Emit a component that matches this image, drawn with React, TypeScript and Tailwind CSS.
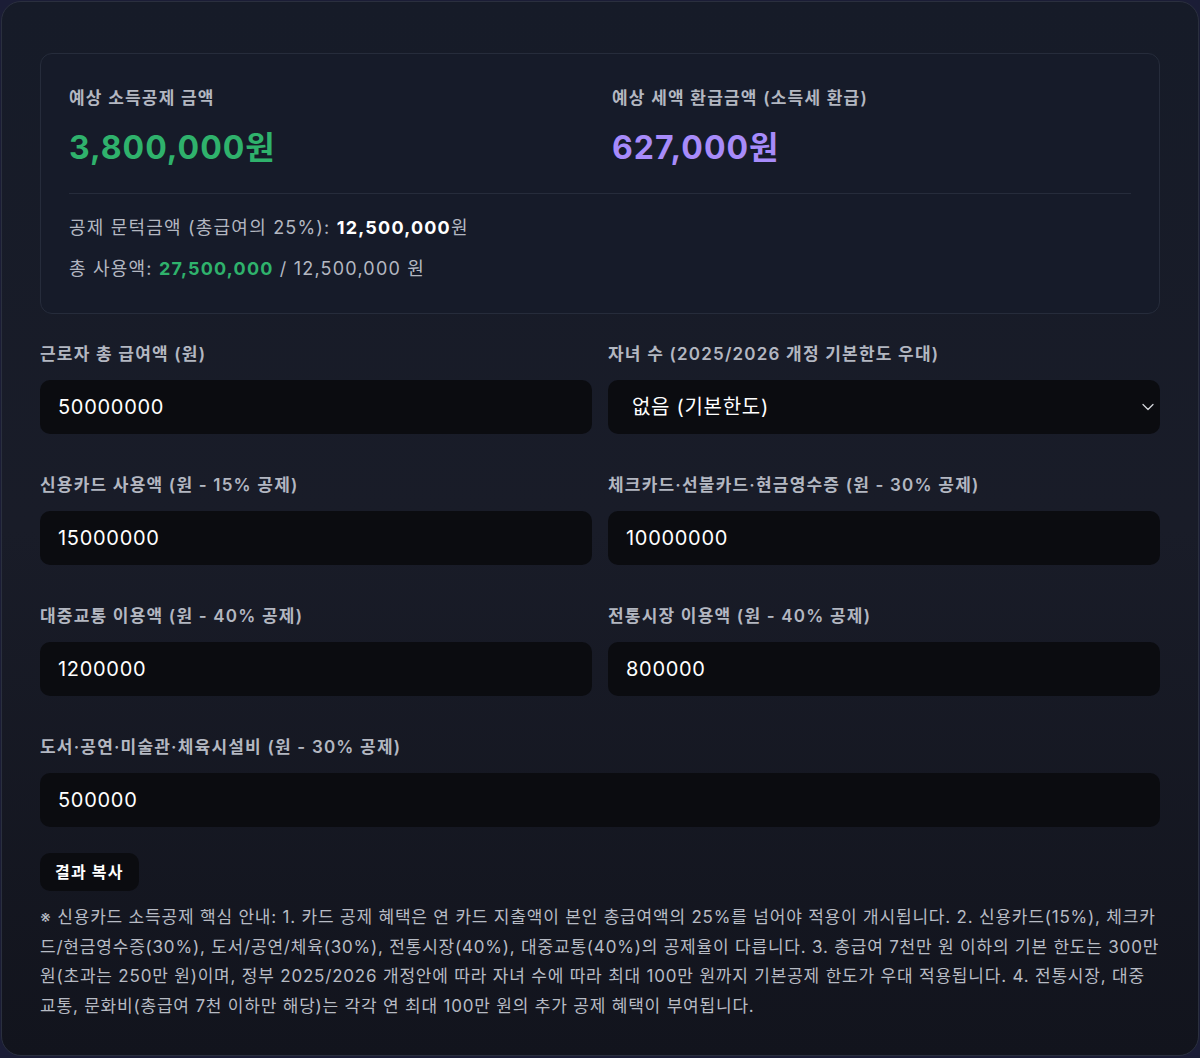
import { ChevronDown } from 'lucide-react';

const FONT = { fontFamily: 'Inter, "Noto Sans CJK KR", sans-serif' };

type Field = {
    label: string;
    value: string;
    wide?: boolean;
};

const FIELDS: Field[] = [
    { label: '신용카드 사용액 (원 - 15% 공제)', value: '15000000' },
    { label: '체크카드·선불카드·현금영수증 (원 - 30% 공제)', value: '10000000' },
    { label: '대중교통 이용액 (원 - 40% 공제)', value: '1200000' },
    { label: '전통시장 이용액 (원 - 40% 공제)', value: '800000' },
    { label: '도서·공연·미술관·체육시설비 (원 - 30% 공제)', value: '500000', wide: true },
];

function Label({ children }: { children: React.ReactNode }) {
    return (
        <label className="mb-[14px] block text-[17px] leading-6 font-semibold tracking-[1.2px] text-[#b3b7c1]">
            {children}
        </label>
    );
}

function NumberInput({ value }: { value: string }) {
    return (
        <input
            type="text"
            defaultValue={value}
            className="h-[54px] w-full rounded-[10px] bg-[#0b0c10] px-[18px] text-[20px] tracking-[0.7px] text-white outline-none"
            style={FONT}
        />
    );
}

export default function App() {
    return (
        <div className="min-h-[1058px] bg-[#1b1d36] px-px pt-px pb-[3px]" style={FONT}>
            <div className="rounded-[20px] border border-[#2a2f3e] bg-gradient-to-b from-[#161b28] via-[#191c28] to-[#12141d] px-[38px] pt-[51px] pb-[34px]">
                {/* Result summary */}
                <div className="rounded-xl border border-[#262c3b] bg-[#161b29] px-[28px] pt-[32px] pb-[30px]">
                    <div className="grid grid-cols-2 gap-6">
                        <div>
                            <p className="text-[17px] leading-6 font-semibold tracking-[1.2px] text-[#b3b7c1]">예상 소득공제 금액</p>
                            <p className="mt-[18px] text-[32px] leading-[40px] font-bold tracking-[1px] text-[#2fb26c]">3,800,000원</p>
                        </div>
                        <div>
                            <p className="text-[17px] leading-6 font-semibold tracking-[1.2px] text-[#b3b7c1]">예상 세액 환급금액 (소득세 환급)</p>
                            <p className="mt-[18px] text-[32px] leading-[40px] font-bold tracking-[1px] text-[#a78bfa]">627,000원</p>
                        </div>
                    </div>
                    <div className="mt-[25px] border-t border-[#262c3b] pt-[20px] text-[18px] leading-7 tracking-[1.2px] text-[#b3b7c1]">
                        <p>
                            공제 문턱금액 (총급여의 25%): <span className="font-bold text-white">12,500,000</span>원
                        </p>
                        <p className="mt-[13px]">
                            총 사용액: <span className="font-bold text-[#2fb26c]">27,500,000</span> / 12,500,000 원
                        </p>
                    </div>
                </div>

                {/* Inputs */}
                <div className="mt-[28px] grid grid-cols-2 gap-x-4 gap-y-[39px]">
                    <div>
                        <Label>근로자 총 급여액 (원)</Label>
                        <NumberInput value="50000000" />
                    </div>
                    <div>
                        <Label>자녀 수 (2025/2026 개정 기본한도 우대)</Label>
                        <div className="relative">
                            <select
                                defaultValue="0"
                                className="h-[54px] w-full appearance-none rounded-[10px] bg-[#0b0c10] pr-[30px] pl-[24px] text-[20px] tracking-[0.7px] text-white outline-none"
                                style={FONT}
                            >
                                <option value="0">없음 (기본한도)</option>
                                <option value="1">1명</option>
                                <option value="2">2명 이상</option>
                            </select>
                            <ChevronDown
                                className="pointer-events-none absolute top-1/2 right-[2px] h-[20px] w-[20px] -translate-y-1/2 text-[#d4d6db]"
                                strokeWidth={1.5}
                            />
                        </div>
                    </div>
                    {FIELDS.map((f) => (
                        <div key={f.label} className={f.wide ? 'col-span-2' : ''}>
                            <Label>{f.label}</Label>
                            <NumberInput value={f.value} />
                        </div>
                    ))}
                </div>

                <button className="mt-[26px] h-[38px] rounded-[10px] bg-[#0b0c10] px-[15px] text-[16px] font-bold tracking-[1.2px] text-white">
                    결과 복사
                </button>

                <p className="mt-[12px] text-[17px] leading-[29.5px] tracking-[0.8px] break-all text-[#b7bbc4]">
                    ※ 신용카드 소득공제 핵심 안내: 1. 카드 공제 혜택은 연 카드 지출액이 본인 총급여액의 25%를 넘어야 적용이 개시됩니다. 2. 신용카드(15%), 체크카드/현금영수증(30%), 도서/공연/체육(30%), 전통시장(40%), 대중교통(40%)의 공제율이 다릅니다. 3. 총급여 7천만 원 이하의 기본 한도는 300만 원(초과는 250만 원)이며, 정부 2025/2026 개정안에 따라 자녀 수에 따라 최대 100만 원까지 기본공제 한도가 우대 적용됩니다. 4. 전통시장, 대중교통, 문화비(총급여 7천 이하만 해당)는 각각 연 최대 100만 원의 추가 공제 혜택이 부여됩니다.
                </p>
            </div>
        </div>
    );
}
